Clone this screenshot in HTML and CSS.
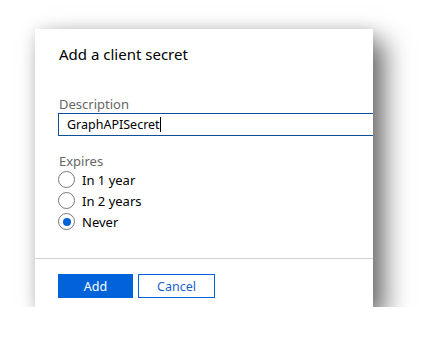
FILE: index.html
```html
<!DOCTYPE html>
<html lang="en">
<head>
    <meta charset="UTF-8">
    <title>Add a client secret</title>
    <link rel="stylesheet" href="styles.css">
</head>
<body>

    <div class="dialog">
        <div class="dialog-body">
            <h1 class="title">Add a client secret</h1>

            <div class="field-label">Description</div>
            <div class="text-input">GraphAPISecret<span class="caret"></span></div>

            <div class="field-label expires">Expires</div>
            <div class="radio-row"><span class="radio"></span>In 1 year</div>
            <div class="radio-row"><span class="radio"></span>In 2 years</div>
            <div class="radio-row"><span class="radio checked"></span>Never</div>
        </div>

        <div class="dialog-footer">
            <button class="btn btn-primary">Add</button>
            <button class="btn btn-default">Cancel</button>
        </div>
    </div>

</body>
</html>
```

FILE: styles.css
```css
body {
    margin: 0;
    padding: 29px 0 0 35px;
    background: #fff;
    font-family: 'Noto Sans', 'Open Sans', sans-serif;
    color: #000;
}

.dialog {
    width: 338px;
    background: #fff;
    overflow: hidden;
    box-shadow: 12px 12px 24px rgba(0, 0, 0, 0.55), 0 0 14px rgba(0, 0, 0, 0.12);
}

.dialog-body {
    padding: 14px 0 0 23px;
}

.title {
    font-size: 15px;
    font-weight: normal;
    line-height: 22px;
    margin: 0;
    padding-left: 1px;
}

.field-label {
    margin-top: 31px;
    font-size: 13px;
    line-height: 17px;
    color: #666;
    padding-left: 1px;
}

.field-label.expires {
    margin-top: 17px;
    line-height: 16px;
}

.text-input {
    width: 340px;
    height: 21px;
    border: 1px solid #114f95;
    padding-left: 8px;
    font-size: 12.5px;
    line-height: 21px;
}

.caret {
    display: inline-block;
    width: 1px;
    height: 15px;
    background: #000;
    vertical-align: -3px;
}

.radio-row {
    display: flex;
    align-items: center;
    gap: 7px;
    height: 21px;
    font-size: 13px;
}

.radio {
    box-sizing: border-box;
    width: 17px;
    height: 17px;
    border: 1px solid #777;
    border-radius: 50%;
    display: flex;
    align-items: center;
    justify-content: center;
}

.radio.checked::after {
    content: '';
    width: 8px;
    height: 8px;
    border-radius: 50%;
    background: #0063d6;
}

.dialog-footer {
    margin-top: 26px;
    border-top: 1px solid #d4d4d4;
    padding: 15px 0 9px 23px;
    display: flex;
    gap: 5px;
}

.btn {
    height: 24px;
    font-family: inherit;
    font-size: 12.5px;
    padding: 0;
    cursor: pointer;
}

.btn-primary {
    width: 75px;
    background: #0063d9;
    border: none;
    color: #fff;
}

.btn-default {
    width: 77px;
    background: #fff;
    border: 1px solid #0063d9;
    color: #1a5fcf;
}
```
